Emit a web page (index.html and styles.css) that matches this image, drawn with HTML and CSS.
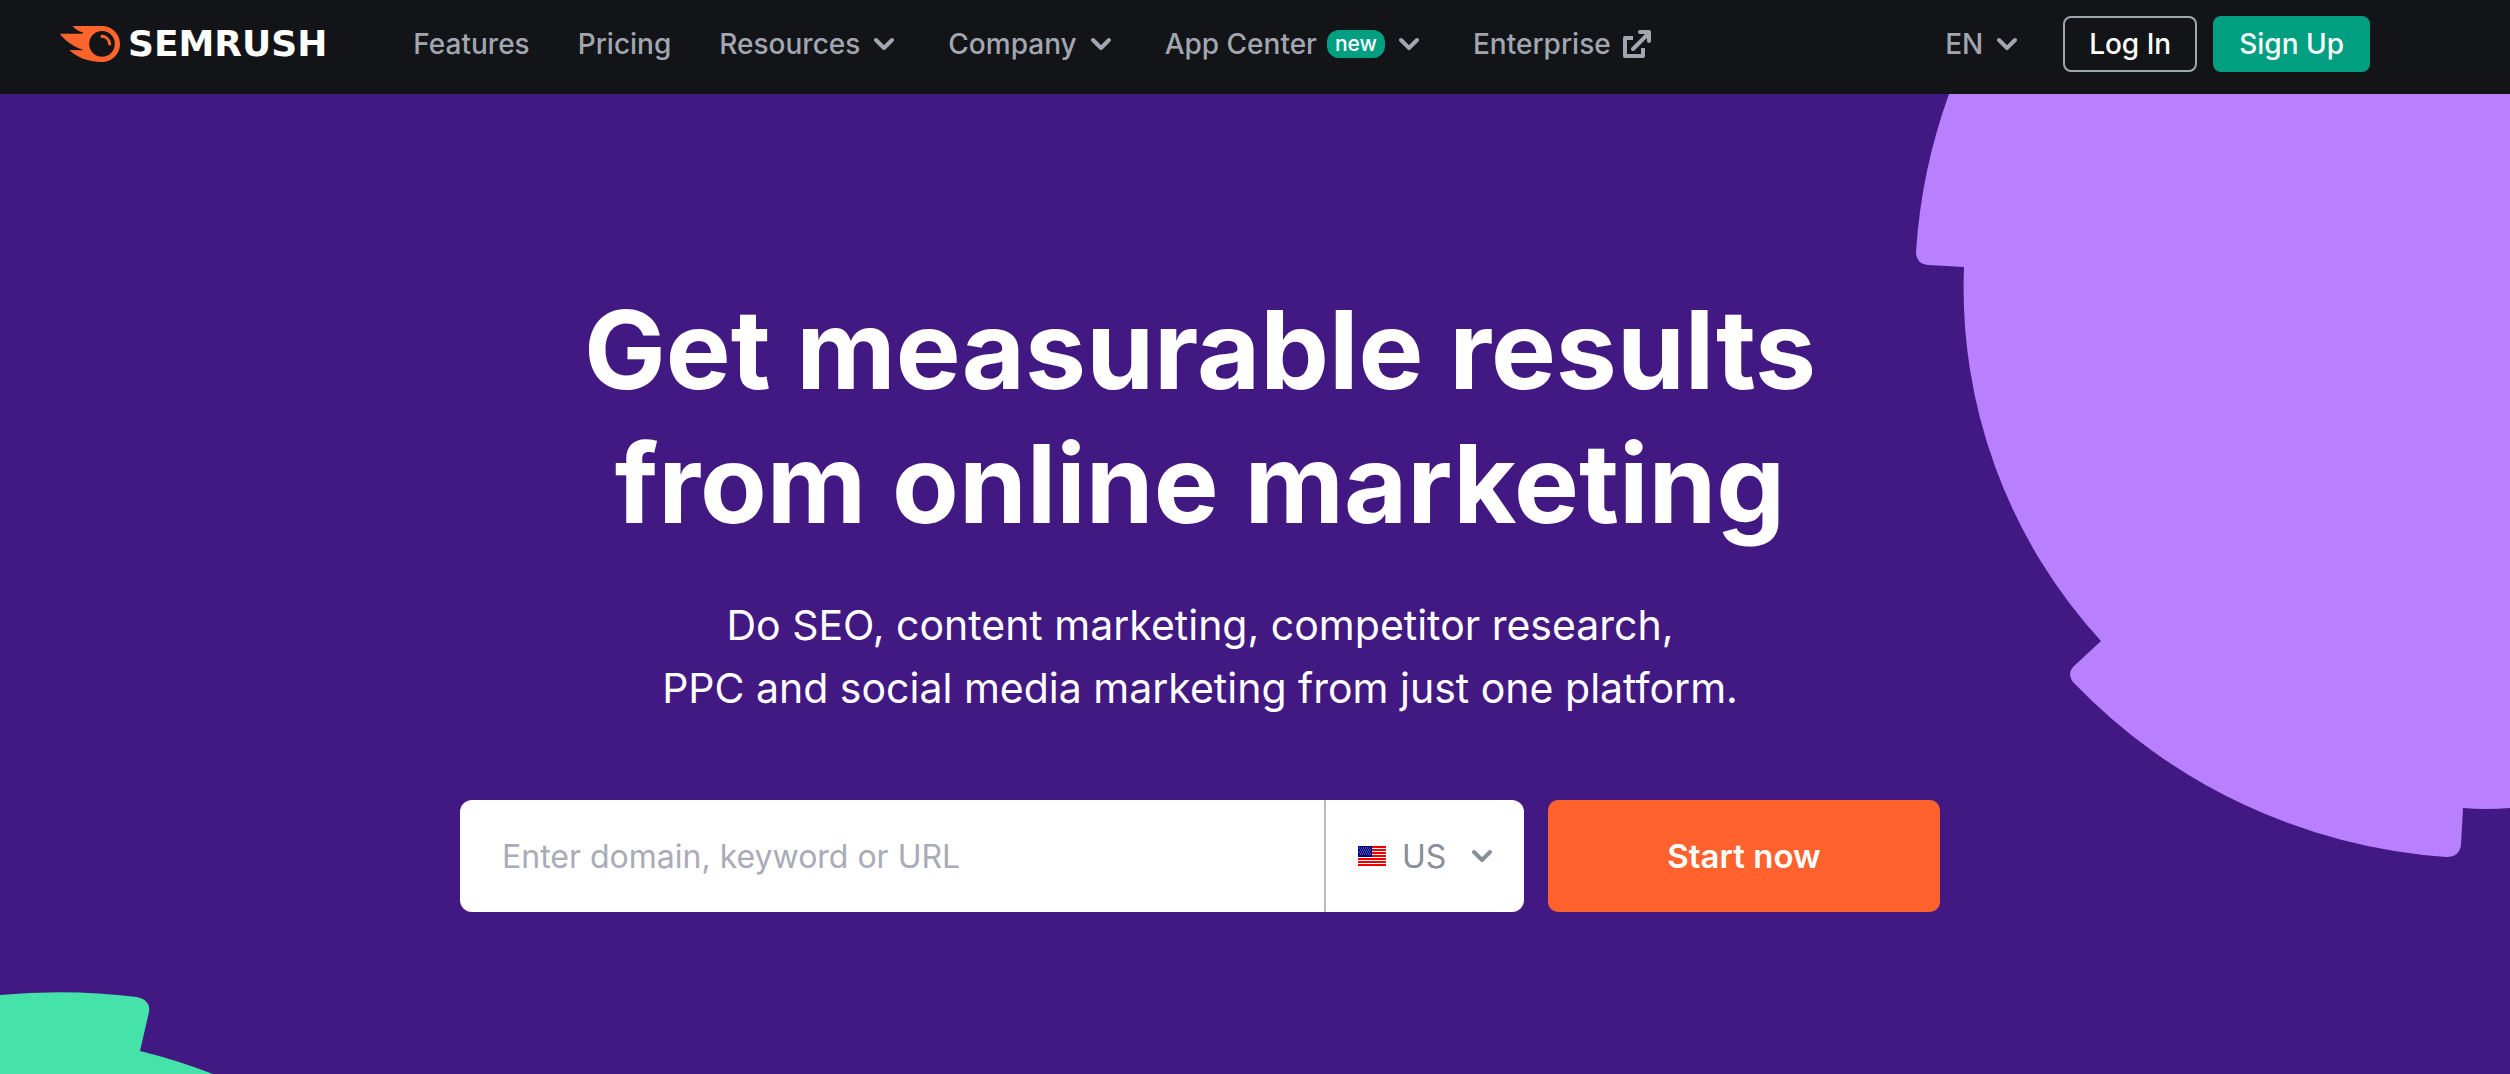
FILE: index.html
```html
<!DOCTYPE html>
<html lang="en">
<head>
    <meta charset="UTF-8">
    <meta name="viewport" content="width=device-width, initial-scale=1.0">
    <title>Semrush - Online Marketing Can Be Easy</title>
    <link rel="stylesheet" href="styles.css">
</head>
<body>
    <!-- Header -->
    <header class="header">
        <div class="header-inner">
            <a class="logo" href="#">
                <svg width="60" height="36" viewBox="0 0 180 108" aria-hidden="true">
                    <path fill="#ff642d" fill-rule="evenodd" d="M38 0C45 10 56 16 69 19Q70 22 66 23H0C12 42 40 62 69 71Q68 73 64 73L28 72C48 93 85 108 126 108A54 54 0 0 0 126 0ZM126 15A38.500 38.500 0 0 1 126 92A38.500 38.500 0 0 1 126 15Z"/>
                    <path fill="none" stroke="#ff642d" stroke-width="9" stroke-linecap="round" d="M126 31C139 32 148 42 149 54"/>
                </svg>
                <span>SEMRUSH</span>
            </a>
            <nav class="nav">
                <a href="#">Features</a>
                <a href="#">Pricing</a>
                <button type="button">Resources
                    <svg class="chevron" viewBox="0 0 24 16"><path d="M4 4l8 8 8-8"/></svg>
                </button>
                <button type="button">Company
                    <svg class="chevron" viewBox="0 0 24 16"><path d="M4 4l8 8 8-8"/></svg>
                </button>
                <button type="button"><span>App Center</span><span class="badge">new</span>
                    <svg class="chevron" viewBox="0 0 24 16"><path d="M4 4l8 8 8-8"/></svg>
                </button>
                <a href="#">Enterprise
                    <svg class="external" viewBox="0 0 28 28">
                        <path d="M10 8H2v18h18v-8"/>
                        <path d="M10 19L24 5" stroke-linecap="round"/>
                        <path d="M17 2h9v9" stroke-linecap="round"/>
                    </svg>
                </a>
            </nav>
            <div class="account">
                <div class="language">
                    <select aria-label="Language">
                        <option>EN</option>
                        <option>ES</option>
                        <option>DE</option>
                    </select>
                    <svg class="chevron" viewBox="0 0 24 16"><path d="M4 4l8 8 8-8"/></svg>
                </div>
                <button type="button" class="btn btn-login">Log In</button>
                <button type="button" class="btn btn-signup">Sign Up</button>
            </div>
        </div>
    </header>

    <!-- Hero -->
    <main class="hero">
        <svg class="shape shape-purple" viewBox="0 0 610 780" aria-hidden="true">
            <path d="M49 0A571 571 0 0 0 16 158Q16 170 28 171L64 173A522 522 0 0 0 201 547L173 573Q167 580 173 588A571 571 0 0 0 546 763Q560 763 561 750L563 714Q586 716 610 714V0Z"/>
        </svg>
        <svg class="shape shape-green" viewBox="0 0 220 82" aria-hidden="true">
            <path d="M0 3A645 645 0 0 1 137 5Q151 8 149 20L140 59Q177 68 213 82H0Z"/>
        </svg>

        <div class="hero-inner">
            <h1>Get measurable results<br>from online marketing</h1>
            <p>Do SEO, content marketing, competitor research,<br>PPC and social media marketing from just one platform.</p>
            <form class="search">
                <div class="search-box">
                    <input type="text" placeholder="Enter domain, keyword or URL" aria-label="Enter domain, keyword or URL">
                    <div class="country">
                        <svg class="flag" viewBox="0 0 28 20" aria-hidden="true">
                            <path fill="#fff" d="M0 0h28v20H0z"/>
                            <path stroke="#f00000" stroke-width="2" d="M0 1h28M0 4h28M0 7h28M0 10h28M0 13h28M0 16h28M0 19h28"/>
                            <path fill="#00007c" d="M0 0h14v11H0z"/>
                            <path stroke="#fff" stroke-opacity=".6" stroke-dasharray="1 1" d="M1 2h12M2 4h11M1 6h12M2 8h11"/>
                        </svg>
                        <select aria-label="Country">
                            <option>US</option>
                            <option>UK</option>
                            <option>CA</option>
                        </select>
                        <svg class="chevron" viewBox="0 0 24 16"><path d="M4 4l8 8 8-8"/></svg>
                    </div>
                </div>
                <button type="button" class="btn-start">Start now</button>
            </form>
        </div>
    </main>
</body>
</html>
```
FILE: styles.css
```css
* {
    box-sizing: border-box;
}
body {
    margin: 0;
    font-family: Inter, "Liberation Sans", sans-serif;
    background: #421983;
}
button,
input,
select {
    font-family: inherit;
    margin: 0;
}
button,
select {
    cursor: pointer;
}

/* Header */
.header {
    background: #121417;
}
.header-inner {
    display: flex;
    align-items: center;
    max-width: 2400px;
    height: 94px;
    padding: 0 30px 6px 60px;
}
.logo {
    display: flex;
    align-items: center;
    gap: 8px;
    color: #fff;
    font-family: "DejaVu Sans", sans-serif;
    font-size: 36px;
    font-weight: 700;
    line-height: 36px;
    text-decoration: none;
}
.nav {
    display: flex;
    align-items: center;
    gap: 48px;
    margin-left: 86px;
}
.nav a,
.nav button {
    display: flex;
    align-items: center;
    gap: 12px;
    padding: 0;
    border: 0;
    background: none;
    color: #a2a6b0;
    font-size: 28px;
    font-weight: 500;
    line-height: 36px;
    white-space: nowrap;
    text-decoration: none;
}
.nav button {
    padding-right: 4px;
}
.chevron {
    width: 24px;
    height: 16px;
    fill: none;
    stroke: #a2a6b0;
    stroke-width: 4;
    stroke-linecap: round;
    stroke-linejoin: round;
}
.external {
    width: 28px;
    height: 28px;
    fill: none;
    stroke: #a2a6b0;
    stroke-width: 4;
    stroke-linejoin: round;
}
.badge {
    margin-left: -2px;
    padding: 0 8px;
    border-radius: 12px;
    background: #009f81;
    color: #fff;
    font-size: 21px;
    line-height: 28px;
}
.account {
    display: flex;
    align-items: center;
    gap: 16px;
    margin-left: auto;
}
.language {
    display: flex;
    position: relative;
    align-items: center;
    margin-right: 28px;
}
.language select {
    width: 74px;
    padding: 0;
    border: 0;
    appearance: none;
    background: none;
    color: #a2a6b0;
    font-size: 28px;
    font-weight: 500;
    line-height: 36px;
}
.language .chevron {
    position: absolute;
    right: 0;
    pointer-events: none;
}
.btn {
    height: 56px;
    padding: 0 24px;
    border: 2px solid #009f81;
    border-radius: 8px;
    color: #fff;
    font-size: 28px;
    font-weight: 500;
}
.btn-login {
    border-color: #a2a6b0;
    background: none;
}
.btn-signup {
    background: #009f81;
}

/* Hero */
.hero {
    position: relative;
    min-height: calc(100vh - 94px);
    overflow: hidden;
}
.shape {
    position: absolute;
}
.shape-purple {
    top: 0;
    right: 0;
    width: 610px;
    height: 780px;
    fill: #b880ff;
}
.shape-green {
    left: 0;
    bottom: 0;
    width: 220px;
    height: 82px;
    fill: #45e2a9;
}
.hero-inner {
    position: relative;
    max-width: 2400px;
    padding: 188px 20px 80px;
    color: #fff;
    text-align: center;
}
.hero h1 {
    margin: 0;
    font-size: 109px;
    font-weight: 700;
    line-height: 134px;
}
.hero p {
    margin: 44px 0 80px;
    font-size: 41px;
    line-height: 63px;
}
.search {
    display: flex;
    gap: 24px;
    max-width: 1480px;
    margin: 0 auto;
}
.search-box {
    display: flex;
    flex: 1;
    height: 112px;
    border-radius: 12px;
    background: #fff;
    overflow: hidden;
}
.search-box input {
    flex: 1;
    min-width: 0;
    padding: 0 42px;
    border: 0;
    outline: 0;
    background: none;
    color: #171a22;
    font-size: 32px;
}
.search-box input::placeholder {
    color: #a9abb6;
}
.country {
    display: flex;
    position: relative;
    align-items: center;
    width: 200px;
    border-left: 2px solid #b9bcc6;
}
.country select {
    width: 100%;
    height: 100%;
    padding: 0 0 0 76px;
    border: 0;
    appearance: none;
    background: none;
    color: #8a8e9b;
    font-size: 32px;
}
.flag {
    position: absolute;
    left: 32px;
    width: 28px;
    height: 20px;
}
.country .chevron {
    position: absolute;
    right: 30px;
    stroke: #8a8e9b;
    pointer-events: none;
}
.btn-start {
    width: 392px;
    border: 0;
    border-radius: 10px;
    background: #ff622d;
    color: #fff;
    font-size: 33px;
    font-weight: 600;
}
```
